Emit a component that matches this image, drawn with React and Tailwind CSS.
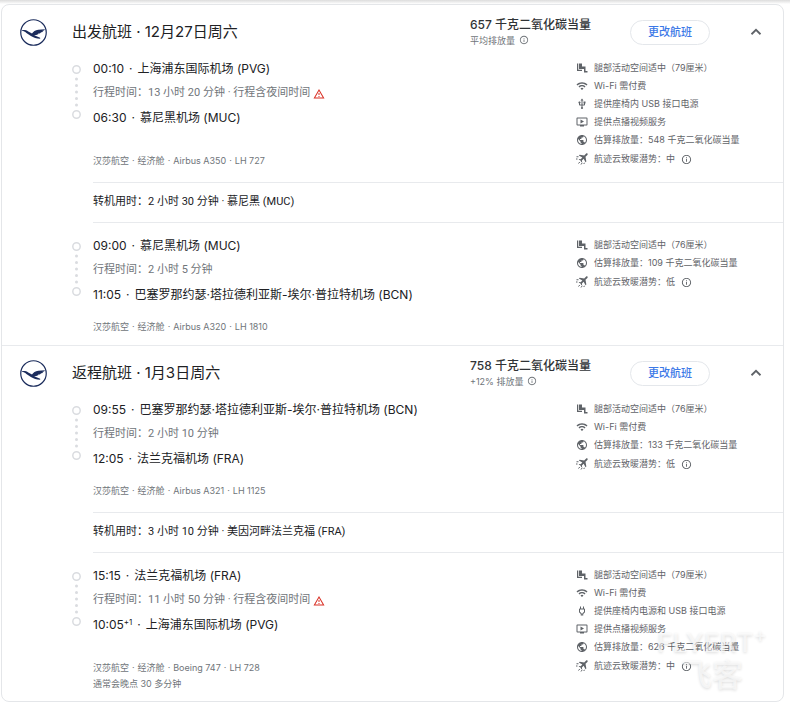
import { Fragment, useState } from "react";
import { ChevronDown, ChevronUp } from "lucide-react";
import {
  MdOndemandVideo,
  MdOutlineInfo,
  MdOutlinePower,
  MdOutlineWarningAmber,
  MdPublic,
  MdUsb,
  MdWifi,
} from "react-icons/md";

const trips = [
  {
    title: "出发航班 · 12月27日周六",
    co2: "657 千克二氧化碳当量",
    co2Note: "平均排放量",
    legs: [
      {
        depart: { time: "00:10", airport: "上海浦东国际机场 (PVG)" },
        duration: "行程时间：13 小时 20 分钟 · 行程含夜间时间",
        overnight: true,
        arrive: { time: "06:30", airport: "慕尼黑机场 (MUC)" },
        flight: ["汉莎航空", "经济舱", "Airbus A350", "LH 727"],
        amenities: [
          ["legroom", "腿部活动空间适中（79厘米）"],
          ["wifi", "Wi-Fi 需付费"],
          ["usb", "提供座椅内 USB 接口电源"],
          ["video", "提供点播视频服务"],
          ["globe", "估算排放量：548 千克二氧化碳当量"],
          ["contrail", "航迹云致暖潜势：中"],
        ],
        layover: "转机用时：2 小时 30 分钟 · 慕尼黑 (MUC)",
      },
      {
        depart: { time: "09:00", airport: "慕尼黑机场 (MUC)" },
        duration: "行程时间：2 小时 5 分钟",
        arrive: { time: "11:05", airport: "巴塞罗那约瑟·塔拉德利亚斯-埃尔·普拉特机场 (BCN)" },
        flight: ["汉莎航空", "经济舱", "Airbus A320", "LH 1810"],
        amenities: [
          ["legroom", "腿部活动空间适中（76厘米）"],
          ["globe", "估算排放量：109 千克二氧化碳当量"],
          ["contrail", "航迹云致暖潜势：低"],
        ],
      },
    ],
  },
  {
    title: "返程航班 · 1月3日周六",
    co2: "758 千克二氧化碳当量",
    co2Note: "+12% 排放量",
    legs: [
      {
        depart: { time: "09:55", airport: "巴塞罗那约瑟·塔拉德利亚斯-埃尔·普拉特机场 (BCN)" },
        duration: "行程时间：2 小时 10 分钟",
        arrive: { time: "12:05", airport: "法兰克福机场 (FRA)" },
        flight: ["汉莎航空", "经济舱", "Airbus A321", "LH 1125"],
        amenities: [
          ["legroom", "腿部活动空间适中（76厘米）"],
          ["wifi", "Wi-Fi 需付费"],
          ["globe", "估算排放量：133 千克二氧化碳当量"],
          ["contrail", "航迹云致暖潜势：低"],
        ],
        layover: "转机用时：3 小时 10 分钟 · 美因河畔法兰克福 (FRA)",
      },
      {
        depart: { time: "15:15", airport: "法兰克福机场 (FRA)" },
        duration: "行程时间：11 小时 50 分钟 · 行程含夜间时间",
        overnight: true,
        arrive: { time: "10:05", nextDay: "+1", airport: "上海浦东国际机场 (PVG)" },
        flight: ["汉莎航空", "经济舱", "Boeing 747", "LH 728"],
        delay: "通常会晚点 30 多分钟",
        amenities: [
          ["legroom", "腿部活动空间适中（79厘米）"],
          ["wifi", "Wi-Fi 需付费"],
          ["power", "提供座椅内电源和 USB 接口电源"],
          ["video", "提供点播视频服务"],
          ["globe", "估算排放量：626 千克二氧化碳当量"],
          ["contrail", "航迹云致暖潜势：中"],
        ],
      },
    ],
  },
];

function LegroomIcon({ className }) {
  return (
    <svg viewBox="0 0 24 24" className={className} fill="currentColor" aria-hidden="true">
      <path d="M2 3h2.500v12.500H12V18H2z" />
      <path d="M6 3h6v6h7v9h4v3h-7v-7H6z" />
    </svg>
  );
}

function ContrailIcon({ className }) {
  return (
    <svg viewBox="0 0 24 24" className={className} fill="currentColor" aria-hidden="true">
      <path d="M22.900 1.100c.8.8.7 2-.1 2.800L19 7.700l1.700 9.100-1.600 1.600-3.800-7-3.500 3.500.4 2.700-1.200 1.200-2-3.700-3.700-2 1.200-1.200 2.700.4 3.500-3.500-7-3.800L7.300 3.400l9.100 1.700 3.500-3.600c.8-.8 2.200-1.100 3-.4z" />
      <path d="M1 7.500h4M0 12h3M5 21l2.500-3M10 23l2.500-3.500M15.500 22l1.500-2.500" fill="none" stroke="currentColor" strokeWidth="2" />
    </svg>
  );
}

const icons = {
  legroom: LegroomIcon,
  wifi: MdWifi,
  usb: MdUsb,
  power: MdOutlinePower,
  video: MdOndemandVideo,
  globe: MdPublic,
  contrail: ContrailIcon,
};

function AirlineLogo() {
  return (
    <svg viewBox="0 0 54 54" className="size-[27px] shrink-0" role="img" aria-label="汉莎航空">
      <circle cx="27" cy="27" r="25.500" fill="#fff" stroke="#1b2c5c" strokeWidth="2.400" />
      <path d="M4 22.500c5-.8 9 .2 12.500 2.600l7.500 3.900c2.500-4 6.500-6.500 12.500-7.500l13.500-1-2 2.700-4 .6 2.500.2-2.400 2.300-3.900.3 2.100.4-2.800 2-3.800.2 1.500.6c-3 1.600-6.200 2.200-8.900 2.700l12 5v2c-7-.2-13.500-2.700-18.500-5.700l-9-6c-3-2.300-5.500-4-9-4.300z" fill="#1b2c5c" />
    </svg>
  );
}

function RouteDots() {
  return (
    <svg viewBox="0 0 9 56" className="mt-[6px] h-14 w-[9px] shrink-0" aria-hidden="true">
      <g fill="none" stroke="#dadce0" strokeWidth="1.500">
        <circle cx="4.500" cy="5.500" r="3.700" />
        <circle cx="4.500" cy="50.500" r="3.700" />
      </g>
      <g fill="#dadce0">
        {[15, 21.5, 28, 34.5, 41].map((y) => (
          <circle key={y} cx="4.500" cy={y} r="1.500" />
        ))}
      </g>
    </svg>
  );
}

function Stop({ stop }) {
  return (
    <div className="flex h-[22px] items-center gap-[5px] text-xs whitespace-nowrap text-[#202124]">
      <span>
        {stop.time}
        {stop.nextDay && <sup className="text-[8px]">{stop.nextDay}</sup>}
      </span>
      <span>·</span>
      <span>{stop.airport}</span>
    </div>
  );
}

function Amenity({ type, label }) {
  const Icon = icons[type];
  return (
    <li className="flex h-[18px] items-center gap-[6px] whitespace-nowrap last:h-5">
      <Icon className="size-3 shrink-0" />
      <span>{label}</span>
      {type === "contrail" && (
        <button type="button" aria-label="详细了解航迹云">
          <MdOutlineInfo className="size-[11px]" />
        </button>
      )}
    </li>
  );
}

function Leg({ leg }) {
  return (
    <>
      <div className="flex pl-[70px]">
        <RouteDots />
        <div className="ml-3 flex min-w-0 flex-1 flex-col justify-between gap-[14px] pb-px">
          <div>
            <Stop stop={leg.depart} />
            <div className="flex h-[27px] items-center gap-[3px] font-['Roboto','Noto_Sans_CJK_SC',sans-serif] text-[11px] whitespace-nowrap text-[#70757a]">
              {leg.duration}
              {leg.overnight && <MdOutlineWarningAmber className="size-3 text-[#d93025]" />}
            </div>
            <Stop stop={leg.arrive} />
          </div>
          <p className="flex gap-[3px] text-[9px] leading-[14px] whitespace-nowrap text-[#70757a]">
            {leg.flight.map((part, index) => (
              <Fragment key={part}>
                {index > 0 && <span>·</span>}
                <span>{part}</span>
              </Fragment>
            ))}
          </p>
        </div>
        <ul className="w-[207px] shrink-0 pt-px text-[9px] text-[#5f6368]">
          {leg.amenities.map(([type, label]) => (
            <Amenity key={type} type={type} label={label} />
          ))}
        </ul>
      </div>
      {leg.delay && <p className="ml-[91px] text-[9px] leading-[15px] text-[#70757a]">{leg.delay}</p>}
      {leg.layover && (
        <div className="mt-[13px] mb-3 ml-[91px] flex h-[41px] items-center border-y border-[#e8eaed] font-['Roboto','Noto_Sans_CJK_SC',sans-serif] text-[11px] text-[#202124]">
          {leg.layover}
        </div>
      )}
    </>
  );
}

function Trip({ trip }) {
  const [open, setOpen] = useState(true);
  const Chevron = open ? ChevronUp : ChevronDown;

  return (
    <section className="border-[#e8eaed] not-first:border-t">
      <header className="flex h-[53px] items-center pt-px pl-[18px]">
        <AirlineLogo />
        <h2 className="ml-[25px] flex-1 text-[15px] whitespace-nowrap text-[#202124]">{trip.title}</h2>
        <div className="w-40 shrink-0">
          <p className="text-xs leading-4 font-medium text-[#303336]">{trip.co2}</p>
          <p className="flex items-center gap-1 text-[9px] leading-[15px] text-[#70757a]">
            {trip.co2Note}
            <MdOutlineInfo className="size-[10px]" />
          </p>
        </div>
        <button type="button" className="h-[25px] w-20 shrink-0 rounded-full border border-[#e4e7eb] text-[11px] font-medium text-[#3b78e7]">更改航班</button>
        <div className="flex w-[73px] shrink-0 justify-center pl-[18px]">
          <button type="button" aria-label="航班详情" aria-expanded={open} onClick={() => setOpen(!open)} className="text-[#5f6368]">
            <Chevron className="size-[18px]" strokeWidth={2.4} strokeLinecap="butt" strokeLinejoin="miter" />
          </button>
        </div>
      </header>
      {open && (
        <div className="pb-[10px]">
          {trip.legs.map((leg) => (
            <Leg key={leg.depart.time} leg={leg} />
          ))}
        </div>
      )}
    </section>
  );
}

export default function App() {
  return (
    <div className="bg-white font-['Inter','Noto_Sans_CJK_SC',sans-serif]">
      <div className="h-1 bg-linear-to-b from-[#dcdcdc] to-white" />
      <main className="relative mr-[6px] ml-px rounded-lg border border-[#e4e6e9]">
        {trips.map((trip) => (
          <Trip key={trip.title} trip={trip} />
        ))}
        <div className="pointer-events-none absolute right-2 bottom-[10px] flex w-[126px] flex-col items-center text-white/60 [text-shadow:0_1px_3px_rgb(0_0_0/0.14)]">
          <span className="text-[26px] leading-8 font-medium whitespace-nowrap">FLYERT<sup className="text-xl">+</sup></span>
          <span className="text-[31px] leading-8 font-medium">飞客</span>
        </div>
      </main>
    </div>
  );
}
